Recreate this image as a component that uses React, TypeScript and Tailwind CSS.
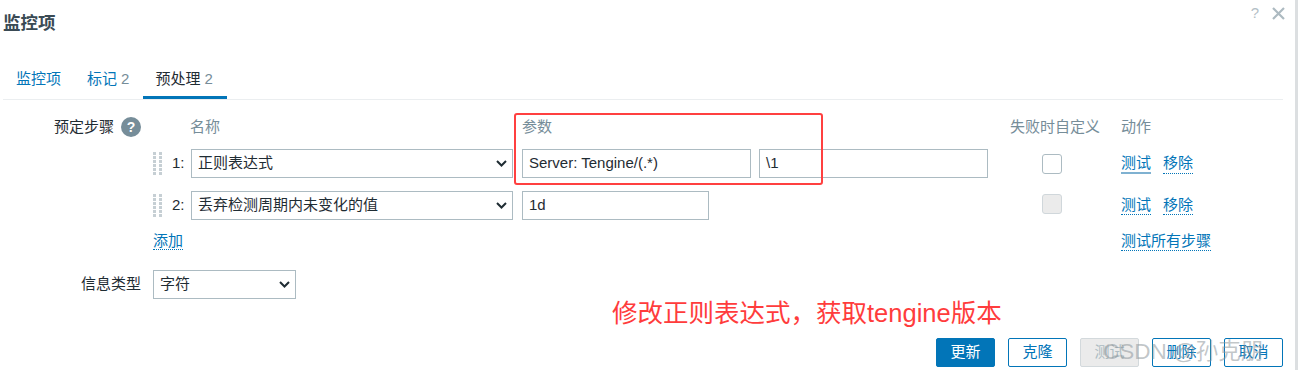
import React from 'react';

const font = { fontFamily: '"Liberation Sans", "Noto Sans CJK SC", sans-serif' };

const Chevron = () => (
  <svg width="11" height="7" viewBox="0 0 11 7" className="shrink-0">
    <polyline points="1,1 5.5,5.5 10,1" fill="none" stroke="#1f2c33" strokeWidth="2" />
  </svg>
);

const Select: React.FC<{ value: string; className: string }> = ({ value, className }) => (
  <div
    className={`flex items-center justify-between border border-[#acbbc2] bg-white pl-[6px] pr-[5px] text-[#1f2c33] ${className}`}
  >
    <span>{value}</span>
    <Chevron />
  </div>
);

const Input: React.FC<{ value: string; className: string }> = ({ value, className }) => (
  <div className={`flex items-center border border-[#acbbc2] bg-white px-[6px] text-[#1f2c33] ${className}`}>
    {value}
  </div>
);

const Handle = () => (
  <div className="grid grid-cols-[3px_3px] gap-x-[3px] gap-y-[1px]">
    {Array.from({ length: 12 }).map((_, i) => (
      <div key={i} className="w-[3px] h-[3px] bg-[#c6cfd4]" />
    ))}
  </div>
);

const Link: React.FC<{ children: React.ReactNode; focus?: boolean }> = ({ children, focus }) => (
  <span
    className={
      focus
        ? 'text-[#0275b8] leading-[18px] border-b-2 border-solid border-[#7fb1d1]'
        : 'text-[#0275b8] leading-[18px] border-b border-dotted border-[#0275b8]'
    }
  >
    {children}
  </span>
);

const Button: React.FC<{ children: React.ReactNode; kind: 'primary' | 'outline' | 'disabled' }> = ({ children, kind }) => {
  const cls =
    kind === 'primary'
      ? 'bg-[#0275b8] border-[#0275b8] text-white'
      : kind === 'outline'
      ? 'bg-white border-[#0275b8] text-[#0275b8]'
      : 'bg-[#ebebeb] border-[#d3d9dc] text-[#acbbc2]';
  return (
    <div className={`w-[59px] h-[29px] border rounded-[2px] flex items-center justify-center ${cls}`}>{children}</div>
  );
};

export default function App() {
  return (
    <div className="flex w-[1298px] h-[370px] bg-white overflow-hidden text-[15px]" style={font}>
      <div className="relative flex-1 flex flex-col">
        {/* 标题栏 */}
        <div className="h-[62px] flex items-start justify-between pl-[3px] pr-[10px]">
          <div className="pt-[11px] text-[17.5px] leading-[24px] font-bold text-[#3a4a54]">监控项</div>
          <div className="flex items-center gap-[13px] pt-[3px] text-[#b3c0c6]">
            <span className="text-[15px] leading-[20px]">?</span>
            <svg width="13" height="13" viewBox="0 0 13 13">
              <path d="M1 1 L12 12 M12 1 L1 12" stroke="#adbac1" strokeWidth="2.2" />
            </svg>
          </div>
        </div>

        {/* 标签页 */}
        <div className="ml-[3px] mr-[12px] flex gap-[2px] border-b border-[#ebeef0] pl-[1px]">
          <div className="h-[37px] px-[12px] flex items-center border-b-[3px] border-transparent text-[#0275b8]">监控项</div>
          <div className="h-[37px] px-[12px] flex items-center border-b-[3px] border-transparent text-[#0275b8]">
            标记<span className="ml-[4px] text-[#768d99]">2</span>
          </div>
          <div className="h-[37px] pl-[12px] pr-[14px] flex items-center border-b-[3px] border-[#0275b8] text-[#1f2c33]">
            预处理<span className="ml-[4px] text-[#768d99]">2</span>
          </div>
        </div>

        {/* 预处理步骤 */}
        <div className="flex pl-[3px] pt-[17px]">
          <div className="w-[138px] mr-[12px] flex items-center justify-end h-[20px] text-[#1f2c33]">
            预定步骤
            <span className="ml-[7px] w-[20px] h-[20px] rounded-full bg-[#768d99] text-white text-[14px] font-bold flex items-center justify-center">
              ?
            </span>
          </div>
          <div className="flex flex-col">
            <div className="flex items-center h-[20px] text-[#768d99]">
              <span className="w-[37px]" />
              <span className="w-[332px]">名称</span>
              <span className="w-[488px]">参数</span>
              <span className="w-[111px]">失败时自定义</span>
              <span>动作</span>
            </div>

            <div className="flex items-center h-[29px] mt-[12px]">
              <div className="w-[19px]"><Handle /></div>
              <div className="w-[19px] text-[#1f2c33]">1:</div>
              <Select value="正则表达式" className="w-[322px] h-[29px]" />
              <Input value="Server: Tengine/(.*)" className="ml-[9px] w-[229px] h-[29px]" />
              <Input value="\1" className="ml-[8px] w-[229px] h-[29px]" />
              <div className="ml-[22px] w-[111px] flex">
                <div className="ml-[32px] w-[20px] h-[20px] rounded-[3px] border border-[#acbbc2] bg-white" />
              </div>
              <div className="flex gap-[12px]">
                <Link focus>测试</Link>
                <Link>移除</Link>
              </div>
            </div>

            <div className="flex items-center h-[29px] mt-[13px]">
              <div className="w-[19px]"><Handle /></div>
              <div className="w-[19px] text-[#1f2c33]">2:</div>
              <Select value="丢弃检测周期内未变化的值" className="w-[322px] h-[29px]" />
              <Input value="1d" className="ml-[9px] w-[187px] h-[29px]" />
              <div className="ml-[301px] w-[111px] flex">
                <div className="ml-[32px] -mt-[3px] w-[20px] h-[20px] rounded-[3px] border border-[#d0d7db] bg-[#ebebeb]" />
              </div>
              <div className="flex gap-[12px]">
                <Link>测试</Link>
                <Link>移除</Link>
              </div>
            </div>

            <div className="flex items-center h-[20px] mt-[11px]">
              <span className="w-[968px]">
                <Link>添加</Link>
              </span>
              <Link>测试所有步骤</Link>
            </div>
          </div>
        </div>

        {/* 信息类型 */}
        <div className="flex items-center pl-[3px] mt-[19px]">
          <div className="w-[138px] mr-[12px] text-right text-[#1f2c33]">信息类型</div>
          <Select value="字符" className="w-[143px] h-[29px]" />
        </div>

        <div className="pl-[612px] text-[25.5px] leading-[28px] text-[#ff3c3c]">修改正则表达式，获取tengine版本</div>

        {/* 按钮 */}
        <div className="flex justify-end gap-[13px] pr-[12px] mt-[11px]">
          <Button kind="primary">更新</Button>
          <Button kind="outline">克隆</Button>
          <Button kind="disabled">测试</Button>
          <Button kind="outline">删除</Button>
          <Button kind="outline">取消</Button>
        </div>

        {/* 标注框 */}
        <div className="absolute left-[514px] top-[113px] w-[309px] h-[72px] border-2 border-[#ff4040] rounded-[3px] pointer-events-none" />

        {/* 水印 */}
        <div className="absolute left-[1103px] top-[338px] text-[22.5px] leading-[28px] text-[#8e969b]/55 whitespace-nowrap pointer-events-none">
          CSDN @孙克朋
        </div>
      </div>
      <div className="w-[3px] h-full bg-[#dcdfe1]" />
    </div>
  );
}
